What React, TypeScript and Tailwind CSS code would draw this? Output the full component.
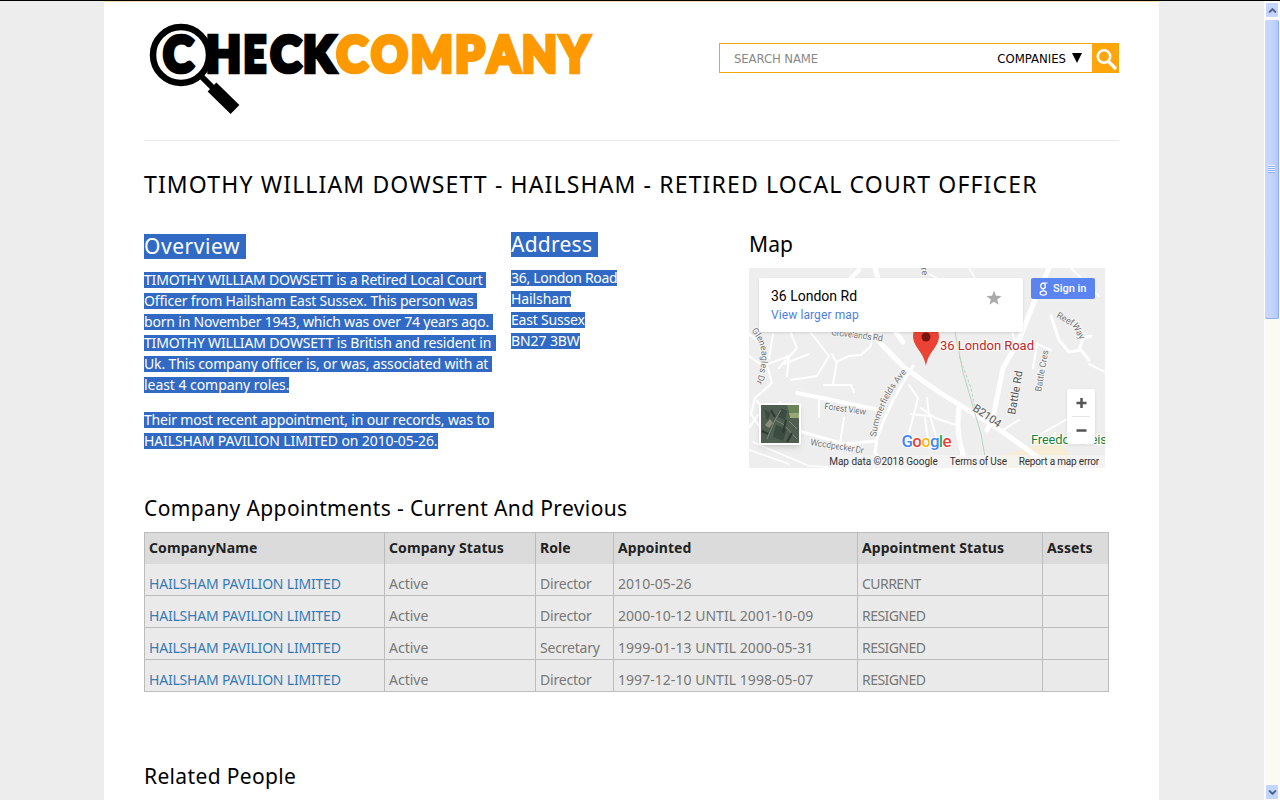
import React from 'react';
import { ChevronDown, ChevronUp } from 'lucide-react';

interface Appointment {
  company: string;
  status: string;
  role: string;
  appointed: string;
  appointmentStatus: string;
}

const appointments: Appointment[] = [
  { company: 'HAILSHAM PAVILION LIMITED', status: 'Active', role: 'Director', appointed: '2010-05-26', appointmentStatus: 'CURRENT' },
  { company: 'HAILSHAM PAVILION LIMITED', status: 'Active', role: 'Director', appointed: '2000-10-12 UNTIL 2001-10-09', appointmentStatus: 'RESIGNED' },
  { company: 'HAILSHAM PAVILION LIMITED', status: 'Active', role: 'Secretary', appointed: '1999-01-13 UNTIL 2000-05-31', appointmentStatus: 'RESIGNED' },
  { company: 'HAILSHAM PAVILION LIMITED', status: 'Active', role: 'Director', appointed: '1997-12-10 UNTIL 1998-05-07', appointmentStatus: 'RESIGNED' },
];

const headers = ['CompanyName', 'Company Status', 'Role', 'Appointed', 'Appointment Status', 'Assets'];

// [letter, left edge, width]
const logoLetters: [string, number, number][] = [
  ['C', 19.2, 30],
  ['H', 62, 35],
  ['E', 99.6, 22.5],
  ['C', 126.5, 30.5],
  ['K', 159, 32],
  ['C', 192.5, 31],
  ['O', 227.3, 36.5],
  ['M', 267, 41.8],
  ['P', 311, 29.5],
  ['A', 344, 32],
  ['N', 378, 35],
  ['Y', 416.3, 29],
];

const Logo: React.FC = () => (
  <svg width="460" height="101" viewBox="0 0 460 101" className="block">
    <g fontFamily="Lato, sans-serif" fontWeight="900" fontSize="49" strokeWidth="4.6">
      {logoLetters.map(([ch, x, w], i) => (
        <text
          key={i}
          x={x}
          y="57.8"
          textLength={w}
          lengthAdjust="spacingAndGlyphs"
          fill={i < 5 ? '#000' : '#f90'}
          stroke={i < 5 ? '#000' : '#f90'}
        >
          {ch}
        </text>
      ))}
    </g>
    <circle cx="37" cy="41" r="28" fill="none" stroke="#000" strokeWidth="6.5" />
    <path d="M58 63 L69 74" stroke="#000" strokeWidth="6" />
    <path d="M68 73 L91 95.500" stroke="#000" strokeWidth="12.5" />
  </svg>
);

const Road: React.FC<{ d: string; w?: number }> = ({ d, w = 2 }) => (
  <path d={d} strokeWidth={w} />
);

const MapView: React.FC = () => (
  <div className="relative w-[356px] h-[200px] overflow-hidden bg-[#eeeeee] font-[Roboto,sans-serif]">
    <svg width="356" height="200" viewBox="0 0 356 200" className="absolute inset-0">
      <defs>
        <path id="gleneagles" d="M2 63 Q20 80 7 116" />
        <path id="summerfields" d="M127 169 Q132 132 160 102" />
      </defs>
      <path d="M250 188 L285 178 L310 172 L330 200 H245 Z" fill="#f6edd6" />
      <g fill="none" stroke="#fff" strokeLinejoin="round" strokeLinecap="round">
        <Road w={5} d="M126 0 L130 14 L140 55 L154 74" />
        <Road w={5} d="M118 60 Q140 85 156 100 L190 124 L235 152 L254 164 L290 190 L300 200" />
        <Road w={4} d="M98 14 L110 2" />
        <Road w={5} d="M238 162 L244 150 L254 100 L270 72 L286 32 L300 0" />
        <Road w={5} d="M210 140 Q207 165 213 182 L217 200" />
        <Road w={3} d="M164 98 Q140 135 128 170 L126 184 L132 194" />
        <Road w={4} d="M48 125 L78 131 L130 142" />
        <Road w={3} d="M50 163 L95 176 L127 173" />
        <Road d="M0 66 L12 76 L23 115 L6 130 L2 146 L10 158" />
        <Road d="M0 88 L14 98 L40 88 L38 108 M20 90 L24 66 M40 60 L48 80 L30 100" />
        <Road d="M8 133 L16 144 L28 142 L31 134 M12 143 L0 160" />
        <Road d="M83 86 L87 94 L100 88 L112 87 L122 78 L124 60 M88 94 L84 116 M75 117 L102 117 L105 124" />
        <Road d="M58 60 L80 88 L68 108 L42 112 M60 86 L35 96" />
        <Road d="M95 150 L91 175 M70 132 L70 149" />
        <Road d="M160 117 L169 130 L160 165 L154 172 M162 146 L180 148 L178 130 M181 148 L188 172" />
        <Road d="M0 182 L40 196 M4 174 L60 198 L100 200" w={1.5} />
        <Road d="M270 108 L268 130 M268 80 L262 60 M284 100 L288 76 L302 82" />
        <Road w={3} d="M302 48 L310 72 L320 84 L332 82 L340 92 M330 82 L334 70 L342 68" />
        <Road d="M172 140 L186 150 L210 158 M176 150 L180 180 M254 162 L270 152" />
        <Road d="M292 166 L320 150 M306 165 L300 176" />
        <Road d="M180 6 L196 14 M220 0 L232 20" w={1.5} />
        <Road d="M322 0 L350 28 M340 96 L356 104" />
      </g>
      <g fill="none" stroke="#b5d6bf" strokeWidth="1">
        <path d="M206 64 L214 104 L232 166 L238 200" />
        <path d="M210 88 L222 120 L226 140" strokeDasharray="3 2" />
      </g>
      <g fontFamily="Roboto, sans-serif" fontSize="9" fill="#777" stroke="#f4f4f4" strokeWidth="2" paintOrder="stroke">
        <text transform="translate(82 67) rotate(7)" textLength="52">Grovelands Rd</text>
        <text><textPath href="#gleneagles">Gleneagles Dr</textPath></text>
        <text transform="translate(75 141) rotate(8)" textLength="42">Forest View</text>
        <text transform="translate(61 177) rotate(9)" textLength="54">Woodpecker Dr</text>
        <text><textPath href="#summerfields" textLength="73">Summerfields Ave</textPath></text>
        <text transform="translate(307 49) rotate(30)">Reef</text>
        <text transform="translate(323 57) rotate(62)">Way</text>
        <text transform="translate(292 124) rotate(-80)" textLength="42">Battle Cres</text>
        <text transform="translate(172 0) rotate(80)">re</text>
      </g>
      <g fontFamily="Roboto, sans-serif" fontSize="11" fill="#555" stroke="#f4f4f4" strokeWidth="2" paintOrder="stroke">
        <text transform="translate(266 147) rotate(-80)">Battle Rd</text>
        <text transform="translate(223 142) rotate(34)">B2104</text>
      </g>
      <path d="M177 98 C175 84 164 79 164 68 A13 13 0 0 1 190 68 C190 79 179 84 177 98 Z" fill="#ea4335" />
      <circle cx="177" cy="69" r="4.5" fill="#7b1410" />
      <g fontFamily="Roboto, sans-serif" stroke="#fff" strokeWidth="2" paintOrder="stroke">
        <text x="191" y="82" fontSize="13" fill="#c5221f" textLength="94">36 London Road</text>
        <text x="282" y="176" fontSize="13" fill="#188038" textLength="76">Freedom Leis</text>
      </g>
      <g fontFamily="Roboto, sans-serif" fontSize="17" fontWeight="500" stroke="#fff" strokeWidth="2" paintOrder="stroke">
        <text x="152.500" y="179" textLength="50">
          <tspan fill="#4285f4">G</tspan>
          <tspan fill="#ea4335">o</tspan>
          <tspan fill="#fbbc05">o</tspan>
          <tspan fill="#4285f4">g</tspan>
          <tspan fill="#34a853">l</tspan>
          <tspan fill="#ea4335">e</tspan>
        </text>
      </g>
    </svg>

    {/* place card */}
    <div className="absolute left-[10px] top-[10px] w-[264px] h-[54px] bg-white rounded-[2px] shadow pl-3 pt-[9px]">
      <div className="text-[14px] leading-[18px] text-black">36 London Rd</div>
      <div className="mt-px text-[12px] leading-[18px] text-[#4b7fe0] tracking-[0.1px]">View larger map</div>
      <svg width="16" height="16" viewBox="0 0 16 16" className="absolute left-[227px] top-[12px]">
        <path d="M8 0.500 L10 5.800 L15.500 6 L11.200 9.400 L12.700 14.800 L8 11.700 L3.300 14.800 L4.800 9.400 L0.500 6 L6 5.800 Z" fill="#aaa" />
      </svg>
    </div>

    <button className="absolute left-[282px] top-[10px] w-[64px] h-[21px] rounded-[2px] bg-[#5b84f1] text-white text-[11px] font-medium leading-[21px] flex items-center pl-2 gap-[5px]">
      <svg width="9" height="14" viewBox="0 0 9 14" fill="none" stroke="#fff">
        <ellipse cx="4" cy="4" rx="2.300" ry="2.800" strokeWidth="1.300" />
        <path d="M4.500 1 H8.500 M5 6.800 Q3 8 5 8.800" />
        <ellipse cx="4.300" cy="11" rx="3.200" ry="2.100" strokeWidth="1.200" />
      </svg>
      <span>Sign in</span>
    </button>

    {/* satellite thumbnail */}
    <div className="absolute left-[10px] top-[135px] w-[42px] h-[42px] border-2 border-white rounded-[2px] shadow-md">
      <svg width="38" height="38" viewBox="0 0 38 38">
        <rect width="38" height="38" fill="#4f5e50" />
        <path d="M26 0 H38 V14 L29 10 Z" fill="#6c8557" />
        <path d="M28 8 H38 V13 H29 Z" fill="#98a875" />
        <path d="M3 4 L10 8 L6 16 Z M15 20 L26 24 L22 36 L12 32 Z M20 3 L26 6 L24 15 L17 12 Z" fill="#3a4b40" />
        <path d="M4 20 L9 14 L12 18 L8 23 Z" fill="#8b8c80" />
        <path d="M6 34 L14 15 L22 19 L36 34 M14 15 L20 5 M28 16 L36 24" stroke="#7d8778" fill="none" />
        <path d="M1 26 L7 29 M25 15 L22 28 M10 5 L14 12 M31 28 L26 37" stroke="#2c3a32" strokeWidth="2" />
      </svg>
    </div>

    {/* zoom controls */}
    <div className="absolute left-[318px] top-[121px] w-[28px] h-[55px] bg-white rounded-[2px] shadow">
      <svg width="28" height="55" viewBox="0 0 28 55">
        <path d="M9.500 14 H19.500 M14.500 9 V19 M9.500 41.500 H19.500" stroke="#555" strokeWidth="2.500" />
        <path d="M5 27.500 H23" stroke="#e6e6e6" />
      </svg>
    </div>

    <div className="absolute right-0 bottom-0 h-[13px] flex items-center bg-[#f5f5f5]/70 text-[#333] text-[10px] leading-[13px] tracking-[-0.18px] whitespace-nowrap gap-3 pr-[6px]">
      <span className="tracking-[-0.02px]">Map data ©2018 Google</span>
      <span>Terms of Use</span>
      <span>Report a map error</span>
    </div>
  </div>
);

const SelectedLine: React.FC<{ className: string; children: string }> = ({ className, children }) => (
  <span className={`block h-4 mb-[5px] leading-4 bg-[#316ac5] whitespace-pre ${className}`}>{children}</span>
);

const Scrollbar: React.FC = () => (
  <div className="w-4 h-full shrink-0 flex flex-col bg-[#fbfbf4] border-l border-white">
    <div className="mt-px h-4 mr-px rounded-[2px] border border-white bg-[#c3d5fd] flex items-center justify-center">
      <ChevronUp size={11} strokeWidth={4.5} className="text-[#4d6185]" />
    </div>
    <div className="mt-[2px] h-[299px] mr-px rounded-[2px] border-r border-b border-[#90aee8] bg-linear-to-r from-[#c9d8fc] via-[#c4d4fd] to-[#b5c8f8] flex flex-col items-center justify-center">
      <span className="w-[7px] h-px bg-[#eef4fe]" />
      <span className="w-[7px] h-px bg-[#8cb0f8]" />
      <span className="w-[7px] h-px bg-[#eef4fe]" />
      <span className="w-[7px] h-px bg-[#8cb0f8]" />
      <span className="w-[7px] h-px bg-[#eef4fe]" />
      <span className="w-[7px] h-px bg-[#8cb0f8]" />
      <span className="w-[7px] h-px bg-[#eef4fe]" />
      <span className="w-[7px] h-px bg-[#8cb0f8]" />
    </div>
    <div className="mt-auto h-4 mr-px rounded-[2px] border border-white bg-[#c3d5fd] flex items-center justify-center">
      <ChevronDown size={11} strokeWidth={4.5} className="text-[#4d6185]" />
    </div>
  </div>
);

export default function App() {
  return (
    <div className="w-[1280px] h-[800px] overflow-hidden flex flex-col bg-[#ededed] border-t border-black font-['Noto_Sans','Open_Sans',sans-serif]">
      <div className="flex flex-1 min-h-0">
        <div className="w-[104px] shrink-0" />
        <main className="w-[1055px] shrink-0 bg-white border-t border-[#f5dcae] px-10 overflow-hidden">
          <header className="h-[139px] flex justify-between border-b border-[#e9e9e9]">
            <div className="pt-3">
              <Logo />
            </div>
            <div className="mt-[41px] w-[400px] h-[30px] flex border border-[#f6a60b] bg-white font-['DejaVu_Sans_Condensed','DejaVu_Sans',sans-serif] text-[13px] tracking-[-0.1px]">
              <span className="flex-1 pl-[14px] leading-[29px] text-[#888] [font-stretch:condensed]">SEARCH NAME</span>
              <span className="leading-[29px] text-black tracking-normal [font-stretch:condensed]">COMPANIES</span>
              <svg width="10" height="10" viewBox="0 0 10 10" className="mt-[9px] ml-[6px] mr-[10px]">
                <path d="M0 0 H10 L5 10 Z" fill="#000" />
              </svg>
              <div className="w-[26px] bg-[#ffa60c]">
                <svg width="26" height="28" viewBox="0 0 26 28" fill="none" stroke="#fff">
                  <circle cx="12" cy="12.500" r="6.200" strokeWidth="2.600" />
                  <path d="M16.500 17.500 L23 24" strokeWidth="3.200" strokeLinecap="round" />
                </svg>
              </div>
            </div>
          </header>

          <h1 className="mt-[27px] h-8 leading-8 text-[23px] tracking-[1.14px] text-black whitespace-nowrap">
            TIMOTHY WILLIAM DOWSETT - HAILSHAM - RETIRED LOCAL COURT OFFICER
          </h1>

          <div className="mt-[32px] h-[236px] flex">
            <section className="w-[367px] pt-[2px] text-white text-[14px] tracking-[-0.17px]">
              <h2 className="w-[102px] h-[25px] leading-[25px] bg-[#316ac5] text-[21px] tracking-[0.55px] mb-[13px]">Overview</h2>
              <SelectedLine className="w-[342px] tracking-[-0.19px]">TIMOTHY WILLIAM DOWSETT is a Retired Local Court </SelectedLine>
              <SelectedLine className="w-[333px]">Officer from Hailsham East Sussex. This person was </SelectedLine>
              <SelectedLine className="w-[349px] tracking-[-0.19px]">born in November 1943, which was over 74 years ago. </SelectedLine>
              <SelectedLine className="w-[352px]">TIMOTHY WILLIAM DOWSETT is British and resident in </SelectedLine>
              <SelectedLine className="w-[348px] tracking-[-0.14px]">Uk. This company officer is, or was, associated with at </SelectedLine>
              <SelectedLine className="w-[145px] tracking-[-0.05px]">least 4 company roles.</SelectedLine>
              <div className="h-[14px]" />
              <SelectedLine className="w-[350px]">Their most recent appointment, in our records, was to </SelectedLine>
              <SelectedLine className="w-[294px] tracking-[-0.11px]">HAILSHAM PAVILION LIMITED on 2010-05-26.</SelectedLine>
            </section>
            <section className="w-[238px] text-white text-[14px] tracking-[-0.1px]">
              <h2 className="w-[87px] h-[25px] leading-[25px] bg-[#316ac5] text-[21px] tracking-[0.25px] mb-[13px]">Address</h2>
              <SelectedLine className="w-[106px] tracking-[-0.3px]">36, London Road</SelectedLine>
              <SelectedLine className="w-[60px]">Hailsham</SelectedLine>
              <SelectedLine className="w-[74px] tracking-[-0.2px]">East Sussex</SelectedLine>
              <SelectedLine className="w-[69px]">BN27 3BW</SelectedLine>
            </section>
            <section>
              <h2 className="h-[25px] leading-[25px] text-[21px] tracking-[0.1px] mb-[11px] text-black">Map</h2>
              <MapView />
            </section>
          </div>

          <h2 className="mt-[28px] h-[25px] leading-[25px] text-[21px] tracking-[0.38px] text-black">
            Company Appointments - Current And Previous
          </h2>
          <table className="mt-[11px] w-[965px] table-fixed border-separate border-spacing-0 border-r border-t border-[#bcbcbc] text-[14px]">
            <colgroup>
              <col className="w-[240px]" />
              <col className="w-[151px]" />
              <col className="w-[78px]" />
              <col className="w-[244px]" />
              <col className="w-[185px]" />
              <col className="w-[66px]" />
            </colgroup>
            <thead>
              <tr className="bg-[#dbdbdb] text-[#222]">
                {headers.map((h) => (
                  <th key={h} className="h-[31px] p-0 pb-[2px] pl-1 border-l border-[#bcbcbc] text-left font-bold leading-[20px] tracking-[0.08px] whitespace-nowrap">
                    {h}
                  </th>
                ))}
              </tr>
            </thead>
            <tbody>
              {appointments.map((a) => (
                <tr key={a.appointed} className="bg-[#eaeaea] text-[#777]">
                  <td className="h-8 p-0 pt-2 pl-1 border-l border-b border-[#bcbcbc] leading-[20px] tracking-[-0.2px] text-[#337ab7] whitespace-nowrap">{a.company}</td>
                  <td className="h-8 p-0 pt-2 pl-1 border-l border-b border-[#bcbcbc] leading-[20px]">{a.status}</td>
                  <td className="h-8 p-0 pt-2 pl-1 border-l border-b border-[#bcbcbc] leading-[20px] tracking-[-0.2px]">{a.role}</td>
                  <td className="h-8 p-0 pt-2 pl-1 border-l border-b border-[#bcbcbc] leading-[20px] tracking-[0.04px] whitespace-nowrap">{a.appointed}</td>
                  <td className="h-8 p-0 pt-2 pl-1 border-l border-b border-[#bcbcbc] leading-[20px] tracking-[-0.55px]">{a.appointmentStatus}</td>
                  <td className="h-8 p-0 border-l border-b border-[#bcbcbc]" />
                </tr>
              ))}
            </tbody>
          </table>

          <h2 className="mt-[72px] h-[25px] leading-[25px] text-[21px] tracking-[0.35px] text-black">Related People</h2>
        </main>
        <div className="flex-1" />
        <Scrollbar />
      </div>
    </div>
  );
}
